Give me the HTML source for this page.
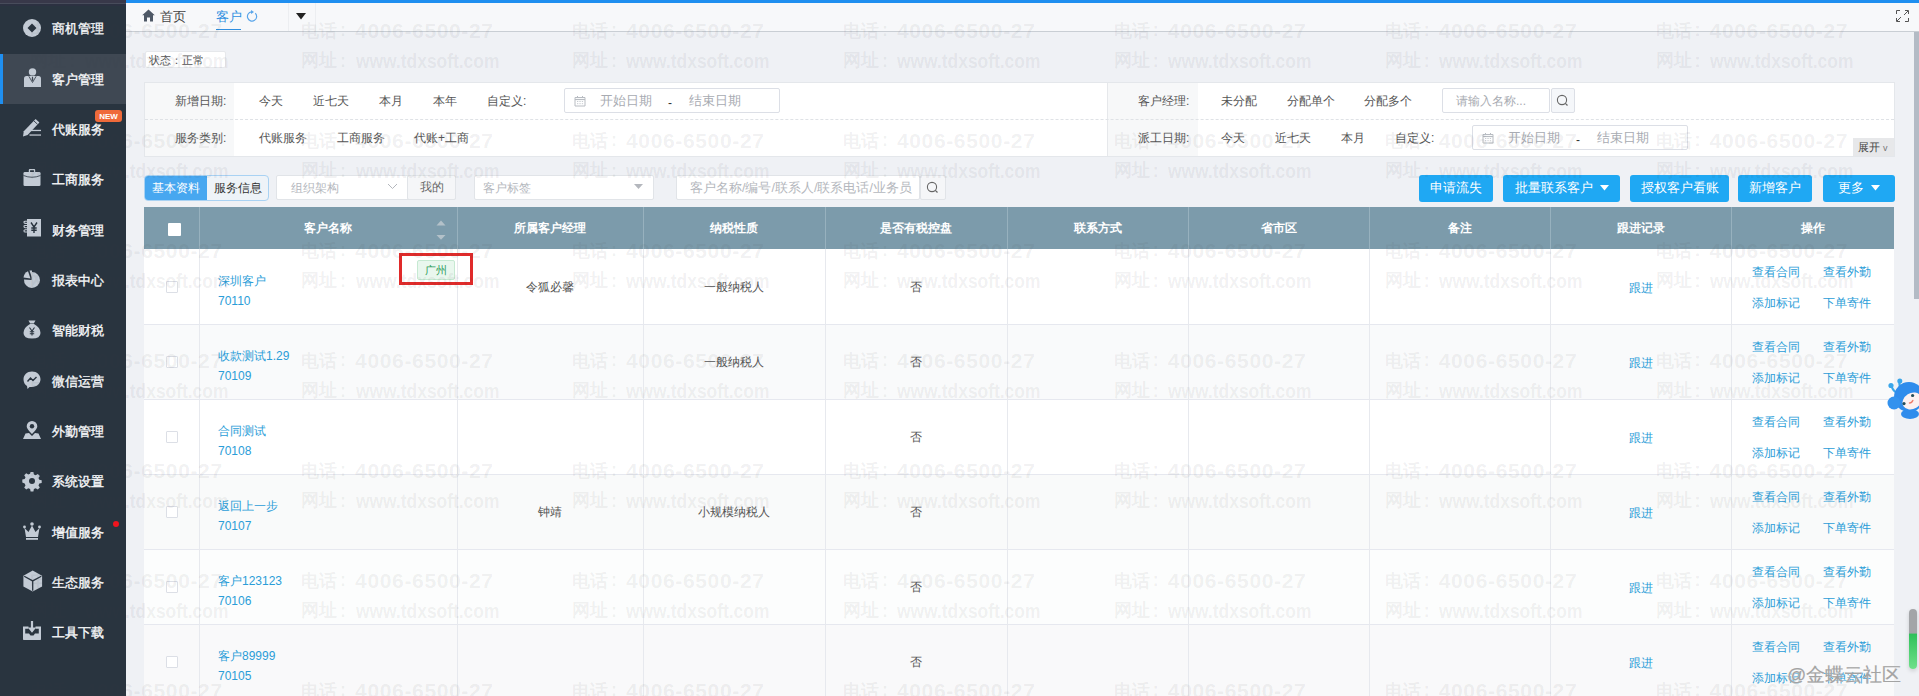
<!DOCTYPE html>
<html><head><meta charset="utf-8"><style>
*{box-sizing:border-box}
html,body{margin:0;padding:0}
body{width:1919px;height:696px;overflow:hidden;position:relative;background:#eff1f5;font-family:"Liberation Sans",sans-serif;font-size:12px;color:#555}
.a{position:absolute;white-space:nowrap}
.c{position:absolute;white-space:nowrap;text-align:center}
#side{position:absolute;left:0;top:0;width:126px;height:696px;background:#29343f}
.mi{position:absolute;left:0;width:126px}
.mi .t{position:absolute;left:52px;font-size:13px;line-height:16px;color:#f7f8fa;-webkit-text-stroke:0.35px #f7f8fa}

.lnk{color:#2c9ed9}
svg{overflow:visible}
.wm{position:absolute;color:rgba(120,120,120,0.11);font-weight:bold;font-size:20px;line-height:20px;white-space:nowrap}
</style></head><body>
<div id="side">
<div class="a" style="left:0;top:0;width:126px;height:3px;background:#383849"></div><div class="a" style="left:0;top:3px;width:126px;height:1px;background:#484c5b"></div><div class="a" style="left:0;top:4px;width:126px;height:2px;background:#2c3141"></div>
<div class="mi" style="top:3.50px;height:50.35px;">
<div style="position:absolute;left:22px;top:14.18px;width:20px;height:20px"><svg width="20" height="20" viewBox="0 0 20 20"><circle cx="10" cy="10" r="9" fill="#c3cbd5"/><path d="M10 5.5L14.5 10L10 14.5L5.5 10Z" fill="#29343f"/></svg></div>
<div class="t" style="top:17.68px">商机管理</div>
</div>
<div class="mi" style="top:53.85px;height:50.35px;background:#3f4853;">
<div class="a" style="left:0;top:0;width:3px;height:100%;background:#1f8ff0"></div>
<div style="position:absolute;left:22px;top:15.18px;width:20px;height:20px"><svg width="20" height="20" viewBox="0 0 20 20"><circle cx="10.5" cy="2.9" r="3.7" fill="#c3cbd5"/><path d="M2 9.5Q2 7 4.5 7L16.5 7Q19 7 19 9.5L19 18L2 18Z" fill="#c3cbd5"/><path d="M6.8 7.2L10.5 13.5L14.2 7.2" stroke="#3f4853" stroke-width="0.9" fill="none"/><path d="M10 7.8H11L11.3 11L10.5 12.6L9.7 11Z" fill="#3f4853"/></svg></div>
<div class="t" style="top:17.68px">客户管理</div>
</div>
<div class="mi" style="top:104.20px;height:50.35px;">
<div style="position:absolute;left:22px;top:14.18px;width:20px;height:20px"><svg width="20" height="20" viewBox="0 0 20 20"><path d="M1 18.5L1.8 13.3L13.6 0.9L17.4 4.4L5.6 16.9Z" fill="#c3cbd5"/><path d="M11.8 2.8L15.6 6.3" stroke="#29343f" stroke-width="0.9"/><rect x="8.5" y="11.8" width="10.5" height="1.3" fill="#c3cbd5"/><rect x="7.5" y="16.4" width="11.5" height="1.3" fill="#c3cbd5"/></svg></div>
<div class="t" style="top:17.68px">代账服务</div>
</div>
<div class="mi" style="top:154.55px;height:50.35px;">
<div style="position:absolute;left:22px;top:14.18px;width:20px;height:20px"><svg width="20" height="20" viewBox="0 0 20 20"><path d="M6.8 3V1Q6.8 0 7.8 0H12.2Q13.2 0 13.2 1V3H11.9V1.3H8.1V3Z" fill="#c3cbd5"/><rect x="1.5" y="3" width="17" height="14" rx="1.3" fill="#c3cbd5"/><path d="M1.5 6.5Q10 10 18.5 6.5" stroke="#29343f" stroke-width="0.8" fill="none"/></svg></div>
<div class="t" style="top:17.68px">工商服务</div>
</div>
<div class="mi" style="top:204.90px;height:50.35px;">
<div style="position:absolute;left:22px;top:14.18px;width:20px;height:20px"><svg width="20" height="20" viewBox="0 0 20 20"><rect x="5" y="0" width="14" height="17.5" fill="#c3cbd5"/><path d="M5.5 2.2H3.2Q2 2.2 2 3.3Q2 4.4 3.2 4.4H5.5M5.5 6.5H3.2Q2 6.5 2 7.6Q2 8.7 3.2 8.7H5.5M5.5 10.8H3.2Q2 10.8 2 11.9Q2 13 3.2 13H5.5" stroke="#c3cbd5" stroke-width="1.1" fill="none"/><path d="M9 3.5L12 8L15 3.5M12 8V14M9.3 9H14.7M9.3 11.3H14.7" stroke="#29343f" stroke-width="1.4" fill="none"/></svg></div>
<div class="t" style="top:17.68px">财务管理</div>
</div>
<div class="mi" style="top:255.25px;height:50.35px;">
<div style="position:absolute;left:22px;top:14.18px;width:20px;height:20px"><svg width="20" height="20" viewBox="0 0 20 20"><path d="M10 3A8 8 0 1 1 2 10.5L9.5 11Z" fill="#c3cbd5"/><path d="M1.5 8.5A8 8 0 0 1 6 2.2L8.5 9.5Z" fill="#c3cbd5"/><path d="M7.5 1.6A8 8 0 0 1 10 1.5L10 9Z" fill="#c3cbd5"/></svg></div>
<div class="t" style="top:17.68px">报表中心</div>
</div>
<div class="mi" style="top:305.60px;height:50.35px;">
<div style="position:absolute;left:22px;top:14.18px;width:20px;height:20px"><svg width="20" height="20" viewBox="0 0 20 20"><path d="M6.5 0.5H13.5L11.8 3.5H8.2Z" fill="#c3cbd5"/><path d="M8 4H12Q18.5 7.5 18.5 13Q18.5 18.5 10 18.5Q1.5 18.5 1.5 13Q1.5 7.5 8 4Z" fill="#c3cbd5"/><path d="M7.5 7.5L10 11L12.5 7.5M10 11V15.5M7.8 11.8H12.2M7.8 13.8H12.2" stroke="#29343f" stroke-width="1.1" fill="none"/></svg></div>
<div class="t" style="top:17.68px">智能财税</div>
</div>
<div class="mi" style="top:355.95px;height:50.35px;">
<div style="position:absolute;left:22px;top:14.18px;width:20px;height:20px"><svg width="20" height="20" viewBox="0 0 20 20"><path d="M10 1.5C15 1.5 18.5 5 18.5 9.3C18.5 13.6 15 17 10 17L7.5 17L5.5 19L5 16Q1.5 14 1.5 9.3C1.5 5 5 1.5 10 1.5Z" fill="#c3cbd5"/><path d="M5.5 11.5L8.5 8L11 10.5L14.5 7" stroke="#29343f" stroke-width="1.4" fill="none"/></svg></div>
<div class="t" style="top:17.68px">微信运营</div>
</div>
<div class="mi" style="top:406.30px;height:50.35px;">
<div style="position:absolute;left:22px;top:14.18px;width:20px;height:20px"><svg width="20" height="20" viewBox="0 0 20 20"><path d="M10 1A5.3 5.3 0 0 1 15.3 6.3C15.3 9.5 10 14 10 14C10 14 4.7 9.5 4.7 6.3A5.3 5.3 0 0 1 10 1Z" fill="#c3cbd5"/><circle cx="10" cy="6.2" r="2.2" fill="#29343f"/><path d="M1 19L3.5 13.5L7 13L10 16L13 13L16.5 13.5L19 19Z" fill="#c3cbd5"/></svg></div>
<div class="t" style="top:17.68px">外勤管理</div>
</div>
<div class="mi" style="top:456.65px;height:50.35px;">
<div style="position:absolute;left:22px;top:14.18px;width:20px;height:20px"><svg width="20" height="20" viewBox="0 0 20 20"><path d="M8.6 1h2.8l.5 2.4 1.8.8 2.1-1.3 2 2-1.3 2.1.8 1.8 2.4.5v2.8l-2.4.5-.8 1.8 1.3 2.1-2 2-2.1-1.3-1.8.8-.5 2.4H8.6l-.5-2.4-1.8-.8-2.1 1.3-2-2 1.3-2.1-.8-1.8L.3 11.4V8.6l2.4-.5.8-1.8-1.3-2.1 2-2 2.1 1.3 1.8-.8z" fill="#c3cbd5"/><circle cx="10" cy="10" r="3" fill="#29343f"/></svg></div>
<div class="t" style="top:17.68px">系统设置</div>
</div>
<div class="mi" style="top:507.00px;height:50.35px;">
<div style="position:absolute;left:22px;top:14.18px;width:20px;height:20px"><svg width="20" height="20" viewBox="0 0 20 20"><circle cx="10" cy="3" r="1.8" fill="#c3cbd5"/><circle cx="2.5" cy="6" r="1.4" fill="#c3cbd5"/><circle cx="17.5" cy="6" r="1.4" fill="#c3cbd5"/><path d="M2.5 7L6.5 11L10 4.5L13.5 11L17.5 7L16 16H4Z" fill="#c3cbd5"/><rect x="4" y="17" width="12" height="1.8" fill="#c3cbd5"/></svg></div>
<div class="t" style="top:17.68px">增值服务</div>
</div>
<div class="mi" style="top:557.35px;height:50.35px;">
<div style="position:absolute;left:22px;top:14.18px;width:20px;height:20px"><svg width="20" height="20" viewBox="0 0 20 20"><path d="M10.7 -1.5L20.1 3.8V14.5L10.7 19.5L1.4 14.5V3.8Z" fill="#c3cbd5"/><path d="M2.2 4.3L10.7 8.9L19.3 4.3M10.7 8.9V18.8" stroke="#29343f" stroke-width="1.3" fill="none"/></svg></div>
<div class="t" style="top:17.68px">生态服务</div>
</div>
<div class="mi" style="top:607.70px;height:50.35px;">
<div style="position:absolute;left:22px;top:14.18px;width:20px;height:20px"><svg width="20" height="20" viewBox="0 0 20 20"><path d="M1 4.5H6.5V6.8H3.2V11.5H7L8.5 13.5H11.5L13 11.5H16.8V6.8H13.5V4.5H19V17.3Q19 18 18.3 18H1.7Q1 18 1 17.3Z" fill="#c3cbd5"/><path d="M8.9 -1H11.1V5.5H14.2L10 10.8L5.8 5.5H8.9Z" fill="#c3cbd5"/></svg></div>
<div class="t" style="top:17.68px">工具下载</div>
</div>
<div class="a" style="left:95px;top:110px;width:27px;height:12px;background:#ef6a3a;border-radius:3px;color:#fff;font-size:8px;line-height:13px;font-weight:bold;text-align:center">NEW</div>
<div class="a" style="left:113px;top:521px;width:6px;height:6px;background:#f0141e;border-radius:50%"></div>
</div>
<div class="a" style="left:126px;top:0;width:1793px;height:3px;background:#1f8ff0"></div>
<div class="a" style="left:126px;top:3px;width:1793px;height:28px;background:#f7f8fa"></div>
<div class="a" style="left:126px;top:31px;width:1793px;height:1px;background:#c9ced4"></div>
<svg class="a" style="left:142px;top:9px" width="13" height="13" viewBox="0 0 13 13"><path d="M6.5 0.5L12.8 6.3H11V12.5H8V8.5H5V12.5H2V6.3H0.2Z" fill="#4e5866"/></svg>
<div class="a" style="left:160px;top:9px;font-size:13px;line-height:16px;color:#444">首页</div>
<div class="a" style="left:216px;top:9px;font-size:13px;line-height:16px;color:#2f8fe0">客户</div>
<svg class="a" style="left:245px;top:10px" width="13" height="13" viewBox="0 0 13 13"><path d="M10.3 3.2A4.6 4.6 0 1 1 6.5 1.9" stroke="#5aa6ea" stroke-width="1.2" fill="none"/><path d="M6 0L9 2L6 4Z" fill="#5aa6ea"/></svg>
<div class="a" style="left:216px;top:29px;width:25px;height:1.4px;background:#2f8fe0"></div>
<div class="a" style="left:288px;top:3px;width:1px;height:28px;background:#eceef1"></div>
<svg class="a" style="left:296px;top:13px" width="10" height="7" viewBox="0 0 10 7"><path d="M0 0H10L5 6.5Z" fill="#222"/></svg>
<div class="a" style="left:315px;top:3px;width:1px;height:28px;background:#eceef1"></div>
<svg class="a" style="left:1896px;top:10px" width="13" height="12" viewBox="0 0 13 12"><path d="M0.5 4V0.5H4M9 0.5H12.5V4M12.5 8V11.5H9M4 11.5H0.5V8M1 11L5 7M12 1L8 5" stroke="#555" stroke-width="1" fill="none"/></svg>
<div class="a" style="left:1914px;top:32px;width:5px;height:267px;background:#b3bbc5"></div>
<div class="a" style="left:145px;top:51px;width:81px;height:17px;background:#fff;border:1px solid #e6e8eb;border-radius:2px;font-size:11px;line-height:16px;color:#555;padding-left:3px">状态：正常</div>
<div class="a" style="left:144px;top:82px;width:1751px;height:75px;background:#fff;border:1px solid #e4e7eb"></div>
<div class="a" style="left:145px;top:83px;width:89px;height:73px;background:#f7f8f9"></div>
<div class="a" style="left:1108px;top:83px;width:90px;height:73px;background:#f7f8f9"></div>
<div class="a" style="left:1107px;top:83px;width:1px;height:73px;background:#e6e8eb"></div>
<div class="a" style="left:145px;top:119px;width:1749px;height:0;border-top:1px dashed #dfe2e6"></div>
<div class="a" style="left:175px;top:92.5px;font-size:12px;line-height:16px;color:#555;">新增日期:</div>
<div class="a" style="left:259px;top:92.5px;font-size:12px;line-height:16px;color:#555;">今天</div>
<div class="a" style="left:313px;top:92.5px;font-size:12px;line-height:16px;color:#555;">近七天</div>
<div class="a" style="left:379px;top:92.5px;font-size:12px;line-height:16px;color:#555;">本月</div>
<div class="a" style="left:433px;top:92.5px;font-size:12px;line-height:16px;color:#555;">本年</div>
<div class="a" style="left:487px;top:92.5px;font-size:12px;line-height:16px;color:#555;">自定义:</div>
<div class="a" style="left:175px;top:129.5px;font-size:12px;line-height:16px;color:#555;">服务类别:</div>
<div class="a" style="left:259px;top:129.5px;font-size:12px;line-height:16px;color:#555;">代账服务</div>
<div class="a" style="left:337px;top:129.5px;font-size:12px;line-height:16px;color:#555;">工商服务</div>
<div class="a" style="left:414px;top:129.5px;font-size:12px;line-height:16px;color:#555;">代账+工商</div>
<div class="a" style="left:1138px;top:92.5px;font-size:12px;line-height:16px;color:#555;">客户经理:</div>
<div class="a" style="left:1221px;top:92.5px;font-size:12px;line-height:16px;color:#555;">未分配</div>
<div class="a" style="left:1287px;top:92.5px;font-size:12px;line-height:16px;color:#555;">分配单个</div>
<div class="a" style="left:1364px;top:92.5px;font-size:12px;line-height:16px;color:#555;">分配多个</div>
<div class="a" style="left:1138px;top:129.5px;font-size:12px;line-height:16px;color:#555;">派工日期:</div>
<div class="a" style="left:1221px;top:129.5px;font-size:12px;line-height:16px;color:#555;">今天</div>
<div class="a" style="left:1275px;top:129.5px;font-size:12px;line-height:16px;color:#555;">近七天</div>
<div class="a" style="left:1341px;top:129.5px;font-size:12px;line-height:16px;color:#555;">本月</div>
<div class="a" style="left:1395px;top:129.5px;font-size:12px;line-height:16px;color:#555;">自定义:</div>
<div class="a" style="left:564px;top:88px;width:216px;height:25px;background:#fff;border:1px solid #dcdfe6;border-radius:2px"></div>
<div class="a" style="left:574px;top:95px;width:12px;height:12px"><svg width="12" height="12" viewBox="0 0 12 12"><path d="M1 2.5H11V11H1Z" stroke="#b8bcc2" stroke-width="1" fill="none"/><path d="M1 4.5H11" stroke="#b8bcc2" stroke-width="1.2"/><path d="M3.5 1V3M8.5 1V3" stroke="#b8bcc2"/><path d="M3 6.5h1.3M5.4 6.5h1.3M7.8 6.5h1.3M3 8.7h1.3M5.4 8.7h1.3M7.8 8.7h1.3" stroke="#c8ccd1"/></svg></div>
<div class="a" style="left:600px;top:92.5px;font-size:13px;line-height:16px;color:#a8abb2;">开始日期</div>
<div class="a" style="left:668px;top:94.5px;font-size:12px;line-height:16px;color:#333;">-</div>
<div class="a" style="left:689px;top:92.5px;font-size:13px;line-height:16px;color:#a8abb2;">结束日期</div>
<div class="a" style="left:1472px;top:125px;width:216px;height:25px;background:#fff;border:1px solid #dcdfe6;border-radius:2px"></div>
<div class="a" style="left:1482px;top:132px;width:12px;height:12px"><svg width="12" height="12" viewBox="0 0 12 12"><path d="M1 2.5H11V11H1Z" stroke="#b8bcc2" stroke-width="1" fill="none"/><path d="M1 4.5H11" stroke="#b8bcc2" stroke-width="1.2"/><path d="M3.5 1V3M8.5 1V3" stroke="#b8bcc2"/><path d="M3 6.5h1.3M5.4 6.5h1.3M7.8 6.5h1.3M3 8.7h1.3M5.4 8.7h1.3M7.8 8.7h1.3" stroke="#c8ccd1"/></svg></div>
<div class="a" style="left:1508px;top:129.5px;font-size:13px;line-height:16px;color:#a8abb2;">开始日期</div>
<div class="a" style="left:1576px;top:131.5px;font-size:12px;line-height:16px;color:#333;">-</div>
<div class="a" style="left:1597px;top:129.5px;font-size:13px;line-height:16px;color:#a8abb2;">结束日期</div>
<div class="a" style="left:1442px;top:88px;width:108px;height:25px;background:#fff;border:1px solid #dcdfe6;border-radius:2px"></div>
<div class="a" style="left:1456px;top:92.5px;font-size:12px;line-height:16px;color:#a8abb2;">请输入名称...</div>
<div class="a" style="left:1551px;top:88px;width:24px;height:25px;background:#f5f7fa;border:1px solid #dcdfe6;border-radius:2px"></div>
<svg class="a" style="left:1556px;top:94px" width="13" height="13" viewBox="0 0 13 13"><circle cx="6" cy="6" r="4.6" stroke="#666" stroke-width="1.1" fill="none"/><path d="M9.3 9.3L11.5 11.5" stroke="#666" stroke-width="1.2"/></svg>
<div class="a" style="left:1853px;top:138px;width:41px;height:18px;background:#e7e8ea;font-size:11px;line-height:18px;color:#444;padding-left:5px">展开 <span style="font-size:9px;color:#777">v</span></div>
<div class="a" style="left:144px;top:175px;width:125px;height:26px;border:1px solid #a9d2f3;border-radius:4px;background:#eef3f8;overflow:hidden"><div class="a" style="left:0;top:0;width:62px;height:24px;background:#47a7f0;color:#fff;font-size:12px;line-height:24px;text-align:center">基本资料</div><div class="a" style="left:62px;top:0;width:61px;height:24px;color:#333;font-size:12px;line-height:24px;text-align:center">服务信息</div></div>
<div class="a" style="left:276px;top:175px;width:180px;height:25px;background:#fff;border:1px solid #e1e4e8;border-radius:2px"></div>
<div class="a" style="left:291px;top:179.5px;font-size:12px;line-height:16px;color:#b4b7bd;">组织架构</div>
<svg class="a" style="left:387px;top:183px" width="11" height="7" viewBox="0 0 11 7"><path d="M1 1L5.5 5.5L10 1" stroke="#b4b7bd" stroke-width="1" fill="none"/></svg>
<div class="a" style="left:407px;top:175px;width:49px;height:25px;background:#f5f6f8;border:1px solid #e1e4e8;border-radius:2px;font-size:12px;line-height:23px;color:#666;text-align:center">我的</div>
<div class="a" style="left:474px;top:175px;width:180px;height:25px;background:#fff;border:1px solid #e1e4e8;border-radius:2px"></div>
<div class="a" style="left:483px;top:179.5px;font-size:12px;line-height:16px;color:#b4b7bd;">客户标签</div>
<svg class="a" style="left:634px;top:184px" width="9" height="5" viewBox="0 0 9 5"><path d="M0 0H9L4.5 5Z" fill="#b4b7bd"/></svg>
<div class="a" style="left:676px;top:175px;width:244px;height:25px;background:#fff;border:1px solid #e1e4e8;border-radius:2px"></div>
<div class="a" style="left:690px;top:179.5px;font-size:12.5px;line-height:16px;color:#b4b7bd;">客户名称/编号/联系人/联系电话/业务员</div>
<div class="a" style="left:920px;top:175px;width:26px;height:25px;background:#f5f6f8;border:1px solid #e1e4e8;border-radius:2px"></div>
<svg class="a" style="left:926px;top:181px" width="13" height="13" viewBox="0 0 13 13"><circle cx="6" cy="6" r="4.6" stroke="#666" stroke-width="1.1" fill="none"/><path d="M9.3 9.3L11.5 11.5" stroke="#666" stroke-width="1.2"/></svg>
<div class="a" style="left:1419px;top:175px;width:74px;height:27px;background:#1fa8f3;border-radius:3px;color:#fff;font-size:13px;line-height:25px;text-align:center">申请流失</div>
<div class="a" style="left:1503px;top:175px;width:117px;height:27px;background:#1fa8f3;border-radius:3px;color:#fff;font-size:13px;line-height:25px;text-align:center">批量联系客户<svg width="9" height="6" viewBox="0 0 9 6" style="margin-left:7px;vertical-align:1px"><path d="M0 0H9L4.5 5.5Z" fill="#fff"/></svg></div>
<div class="a" style="left:1630px;top:175px;width:99px;height:27px;background:#1fa8f3;border-radius:3px;color:#fff;font-size:13px;line-height:25px;text-align:center">授权客户看账</div>
<div class="a" style="left:1738px;top:175px;width:74px;height:27px;background:#1fa8f3;border-radius:3px;color:#fff;font-size:13px;line-height:25px;text-align:center">新增客户</div>
<div class="a" style="left:1823px;top:175px;width:72px;height:27px;background:#1fa8f3;border-radius:3px;color:#fff;font-size:13px;line-height:25px;text-align:center">更多<svg width="9" height="6" viewBox="0 0 9 6" style="margin-left:7px;vertical-align:1px"><path d="M0 0H9L4.5 5.5Z" fill="#fff"/></svg></div>
<div class="a" style="left:144px;top:249px;width:1750px;height:75px;background:#ffffff"></div>
<div class="a" style="left:144px;top:324px;width:1750px;height:75px;background:#f9fafb"></div>
<div class="a" style="left:144px;top:399px;width:1750px;height:75px;background:#ffffff"></div>
<div class="a" style="left:144px;top:474px;width:1750px;height:75px;background:#f9fafa"></div>
<div class="a" style="left:144px;top:549px;width:1750px;height:75px;background:#fcfdfd"></div>
<div class="a" style="left:144px;top:624px;width:1750px;height:75px;background:#f9f9fa"></div>
<div class="a" style="left:144px;top:324px;width:1750px;height:1px;background:#e6e8ef"></div>
<div class="a" style="left:144px;top:399px;width:1750px;height:1px;background:#e6e8ef"></div>
<div class="a" style="left:144px;top:474px;width:1750px;height:1px;background:#e6e8ef"></div>
<div class="a" style="left:144px;top:549px;width:1750px;height:1px;background:#e6e8ef"></div>
<div class="a" style="left:144px;top:624px;width:1750px;height:1px;background:#e6e8ef"></div>
<div class="a" style="left:144px;top:699px;width:1750px;height:1px;background:#e6e8ef"></div>
<div class="a" style="left:199px;top:249px;width:1px;height:447px;background:#e7e9ee"></div>
<div class="a" style="left:457px;top:249px;width:1px;height:447px;background:#e7e9ee"></div>
<div class="a" style="left:643px;top:249px;width:1px;height:447px;background:#e7e9ee"></div>
<div class="a" style="left:825px;top:249px;width:1px;height:447px;background:#e7e9ee"></div>
<div class="a" style="left:1007px;top:249px;width:1px;height:447px;background:#e7e9ee"></div>
<div class="a" style="left:1188px;top:249px;width:1px;height:447px;background:#e7e9ee"></div>
<div class="a" style="left:1369px;top:249px;width:1px;height:447px;background:#e7e9ee"></div>
<div class="a" style="left:1550px;top:249px;width:1px;height:447px;background:#e7e9ee"></div>
<div class="a" style="left:1731px;top:249px;width:1px;height:447px;background:#e7e9ee"></div>
<div class="a" style="left:144px;top:207px;width:1750px;height:42px;background:#7c9bab"></div>
<div class="a" style="left:199px;top:207px;width:1px;height:42px;background:#97b1be"></div>
<div class="a" style="left:457px;top:207px;width:1px;height:42px;background:#97b1be"></div>
<div class="a" style="left:643px;top:207px;width:1px;height:42px;background:#97b1be"></div>
<div class="a" style="left:825px;top:207px;width:1px;height:42px;background:#97b1be"></div>
<div class="a" style="left:1007px;top:207px;width:1px;height:42px;background:#97b1be"></div>
<div class="a" style="left:1188px;top:207px;width:1px;height:42px;background:#97b1be"></div>
<div class="a" style="left:1369px;top:207px;width:1px;height:42px;background:#97b1be"></div>
<div class="a" style="left:1550px;top:207px;width:1px;height:42px;background:#97b1be"></div>
<div class="a" style="left:1731px;top:207px;width:1px;height:42px;background:#97b1be"></div>
<div class="c" style="left:199px;top:220px;width:258px;font-size:12px;line-height:16px;font-weight:bold;color:#fff">客户名称</div>
<div class="c" style="left:457px;top:220px;width:186px;font-size:12px;line-height:16px;font-weight:bold;color:#fff">所属客户经理</div>
<div class="c" style="left:643px;top:220px;width:182px;font-size:12px;line-height:16px;font-weight:bold;color:#fff">纳税性质</div>
<div class="c" style="left:825px;top:220px;width:182px;font-size:12px;line-height:16px;font-weight:bold;color:#fff">是否有税控盘</div>
<div class="c" style="left:1007px;top:220px;width:181px;font-size:12px;line-height:16px;font-weight:bold;color:#fff">联系方式</div>
<div class="c" style="left:1188px;top:220px;width:181px;font-size:12px;line-height:16px;font-weight:bold;color:#fff">省市区</div>
<div class="c" style="left:1369px;top:220px;width:181px;font-size:12px;line-height:16px;font-weight:bold;color:#fff">备注</div>
<div class="c" style="left:1550px;top:220px;width:181px;font-size:12px;line-height:16px;font-weight:bold;color:#fff">跟进记录</div>
<div class="c" style="left:1731px;top:220px;width:163px;font-size:12px;line-height:16px;font-weight:bold;color:#fff">操作</div>
<div class="a" style="left:168px;top:223px;width:13px;height:13px;background:#fff;border-radius:1px"></div>
<svg class="a" style="left:436px;top:210px" width="10" height="31" viewBox="0 0 10 31"><path d="M0.5 15.6L5 10.6L9.5 15.6Z" fill="#b3c1c9"/><path d="M0.5 25L5 29.8L9.5 25Z" fill="#b3c1c9"/></svg>
<div class="a" style="left:166px;top:281px;width:12px;height:12px;background:#fff;border:1px solid #dcdfe6;border-radius:1px"></div>
<div class="a" style="left:218px;top:273px;font-size:12px;line-height:16px;color:#2b9dd8">深圳客户</div>
<div class="a" style="left:218px;top:293px;font-size:12px;line-height:16px;color:#2b9dd8">70110</div>
<div class="c" style="left:457px;top:279px;width:186px;font-size:12px;line-height:16px;color:#555">令狐必馨</div>
<div class="c" style="left:643px;top:279px;width:182px;font-size:12px;line-height:16px;color:#555">一般纳税人</div>
<div class="c" style="left:825px;top:279px;width:182px;font-size:12px;line-height:16px;color:#555">否</div>
<div class="c" style="left:1550px;top:280px;width:181px;font-size:12px;line-height:16px;color:#2b9dd8">跟进</div>
<div class="a" style="left:1752px;top:264px;font-size:12px;line-height:16px;color:#2b9dd8">查看合同</div>
<div class="a" style="left:1823px;top:264px;font-size:12px;line-height:16px;color:#2b9dd8">查看外勤</div>
<div class="a" style="left:1752px;top:295px;font-size:12px;line-height:16px;color:#2b9dd8">添加标记</div>
<div class="a" style="left:1823px;top:295px;font-size:12px;line-height:16px;color:#2b9dd8">下单寄件</div>
<div class="a" style="left:166px;top:356px;width:12px;height:12px;background:#fff;border:1px solid #dcdfe6;border-radius:1px"></div>
<div class="a" style="left:218px;top:348px;font-size:12px;line-height:16px;color:#2b9dd8">收款测试1.29</div>
<div class="a" style="left:218px;top:368px;font-size:12px;line-height:16px;color:#2b9dd8">70109</div>
<div class="c" style="left:643px;top:354px;width:182px;font-size:12px;line-height:16px;color:#555">一般纳税人</div>
<div class="c" style="left:825px;top:354px;width:182px;font-size:12px;line-height:16px;color:#555">否</div>
<div class="c" style="left:1550px;top:355px;width:181px;font-size:12px;line-height:16px;color:#2b9dd8">跟进</div>
<div class="a" style="left:1752px;top:339px;font-size:12px;line-height:16px;color:#2b9dd8">查看合同</div>
<div class="a" style="left:1823px;top:339px;font-size:12px;line-height:16px;color:#2b9dd8">查看外勤</div>
<div class="a" style="left:1752px;top:370px;font-size:12px;line-height:16px;color:#2b9dd8">添加标记</div>
<div class="a" style="left:1823px;top:370px;font-size:12px;line-height:16px;color:#2b9dd8">下单寄件</div>
<div class="a" style="left:166px;top:431px;width:12px;height:12px;background:#fff;border:1px solid #dcdfe6;border-radius:1px"></div>
<div class="a" style="left:218px;top:423px;font-size:12px;line-height:16px;color:#2b9dd8">合同测试</div>
<div class="a" style="left:218px;top:443px;font-size:12px;line-height:16px;color:#2b9dd8">70108</div>
<div class="c" style="left:825px;top:429px;width:182px;font-size:12px;line-height:16px;color:#555">否</div>
<div class="c" style="left:1550px;top:430px;width:181px;font-size:12px;line-height:16px;color:#2b9dd8">跟进</div>
<div class="a" style="left:1752px;top:414px;font-size:12px;line-height:16px;color:#2b9dd8">查看合同</div>
<div class="a" style="left:1823px;top:414px;font-size:12px;line-height:16px;color:#2b9dd8">查看外勤</div>
<div class="a" style="left:1752px;top:445px;font-size:12px;line-height:16px;color:#2b9dd8">添加标记</div>
<div class="a" style="left:1823px;top:445px;font-size:12px;line-height:16px;color:#2b9dd8">下单寄件</div>
<div class="a" style="left:166px;top:506px;width:12px;height:12px;background:#fff;border:1px solid #dcdfe6;border-radius:1px"></div>
<div class="a" style="left:218px;top:498px;font-size:12px;line-height:16px;color:#2b9dd8">返回上一步</div>
<div class="a" style="left:218px;top:518px;font-size:12px;line-height:16px;color:#2b9dd8">70107</div>
<div class="c" style="left:457px;top:504px;width:186px;font-size:12px;line-height:16px;color:#555">钟靖</div>
<div class="c" style="left:643px;top:504px;width:182px;font-size:12px;line-height:16px;color:#555">小规模纳税人</div>
<div class="c" style="left:825px;top:504px;width:182px;font-size:12px;line-height:16px;color:#555">否</div>
<div class="c" style="left:1550px;top:505px;width:181px;font-size:12px;line-height:16px;color:#2b9dd8">跟进</div>
<div class="a" style="left:1752px;top:489px;font-size:12px;line-height:16px;color:#2b9dd8">查看合同</div>
<div class="a" style="left:1823px;top:489px;font-size:12px;line-height:16px;color:#2b9dd8">查看外勤</div>
<div class="a" style="left:1752px;top:520px;font-size:12px;line-height:16px;color:#2b9dd8">添加标记</div>
<div class="a" style="left:1823px;top:520px;font-size:12px;line-height:16px;color:#2b9dd8">下单寄件</div>
<div class="a" style="left:166px;top:581px;width:12px;height:12px;background:#fff;border:1px solid #dcdfe6;border-radius:1px"></div>
<div class="a" style="left:218px;top:573px;font-size:12px;line-height:16px;color:#2b9dd8">客户123123</div>
<div class="a" style="left:218px;top:593px;font-size:12px;line-height:16px;color:#2b9dd8">70106</div>
<div class="c" style="left:825px;top:579px;width:182px;font-size:12px;line-height:16px;color:#555">否</div>
<div class="c" style="left:1550px;top:580px;width:181px;font-size:12px;line-height:16px;color:#2b9dd8">跟进</div>
<div class="a" style="left:1752px;top:564px;font-size:12px;line-height:16px;color:#2b9dd8">查看合同</div>
<div class="a" style="left:1823px;top:564px;font-size:12px;line-height:16px;color:#2b9dd8">查看外勤</div>
<div class="a" style="left:1752px;top:595px;font-size:12px;line-height:16px;color:#2b9dd8">添加标记</div>
<div class="a" style="left:1823px;top:595px;font-size:12px;line-height:16px;color:#2b9dd8">下单寄件</div>
<div class="a" style="left:166px;top:656px;width:12px;height:12px;background:#fff;border:1px solid #dcdfe6;border-radius:1px"></div>
<div class="a" style="left:218px;top:648px;font-size:12px;line-height:16px;color:#2b9dd8">客户89999</div>
<div class="a" style="left:218px;top:668px;font-size:12px;line-height:16px;color:#2b9dd8">70105</div>
<div class="c" style="left:825px;top:654px;width:182px;font-size:12px;line-height:16px;color:#555">否</div>
<div class="c" style="left:1550px;top:655px;width:181px;font-size:12px;line-height:16px;color:#2b9dd8">跟进</div>
<div class="a" style="left:1752px;top:639px;font-size:12px;line-height:16px;color:#2b9dd8">查看合同</div>
<div class="a" style="left:1823px;top:639px;font-size:12px;line-height:16px;color:#2b9dd8">查看外勤</div>
<div class="a" style="left:1752px;top:670px;font-size:12px;line-height:16px;color:#2b9dd8">添加标记</div>
<div class="a" style="left:1823px;top:670px;font-size:12px;line-height:16px;color:#2b9dd8">下单寄件</div>
<div class="a" style="left:417px;top:260px;width:38px;height:20px;background:#e9f7ee;border:1px solid #c6e9d2;border-radius:2px;color:#2f9d5c;font-size:11px;line-height:18px;text-align:center">广州</div>
<div class="a" style="left:399px;top:253px;width:74px;height:32px;border:3px solid #e02a2a"></div>
<svg class="a" style="left:1886px;top:376px" width="33" height="45" viewBox="0 0 33 45"><path d="M5.5 10Q7 15 11 17" stroke="#3aa6ea" stroke-width="2.2" fill="none" stroke-linecap="round"/><circle cx="5" cy="9.5" r="2.6" fill="#3aa6ea"/><path d="M13.5 5Q13 11 15.5 13" stroke="#3aa6ea" stroke-width="2.2" fill="none" stroke-linecap="round"/><circle cx="13.8" cy="5" r="2.5" fill="#3aa6ea"/><circle cx="23" cy="21" r="15" fill="#2f8cec"/><circle cx="8" cy="27" r="6.5" fill="#3392ee"/><ellipse cx="24" cy="38" rx="9" ry="5" fill="#2f8cec"/><ellipse cx="26" cy="25" rx="10" ry="8" transform="rotate(-32 26 25)" fill="#fcf1f1"/><circle cx="26.6" cy="19.5" r="1.6" fill="#234e5a"/><circle cx="18" cy="27.6" r="1.6" fill="#234e5a"/><path d="M23.5 27Q25.8 27 26.8 24.5" stroke="#ee7d6a" stroke-width="1.5" fill="none" stroke-linecap="round"/></svg>
<div class="a" style="left:1909px;top:609px;width:8px;height:60px;border-radius:4px;background:linear-gradient(#a3a5a8 0 40%,#2fc15a 42%,#6fe08a 100%);box-shadow:0 2px 4px rgba(0,0,0,0.15)"></div>
<style>.w1,.w2,.w3,.w4,.w5{position:absolute;white-space:nowrap;font-weight:bold;color:rgba(60,62,70,0.08)}.w1{font-size:18px;line-height:18px}.w2{font-size:18px;line-height:18px}.w3{font-size:21px;line-height:21px;letter-spacing:0.65px}.w4{font-size:20px;line-height:20px;transform:scaleX(0.87);transform-origin:0 0}</style>
<div class="w1" style="left:-240.7px;top:22.0px">电话</div><div class="w2" style="left:-201.7px;top:21.0px">:</div><div class="w3" style="left:-186.7px;top:20.1px">4006-6500-27</div>
<div class="w1" style="left:-240.7px;top:50.9px">网址</div><div class="w2" style="left:-201.7px;top:51.9px">:</div><div class="w4" style="left:-186.3px;top:50.5px">www.tdxsoft.com</div>
<div class="w1" style="left:30.2px;top:22.0px">电话</div><div class="w2" style="left:69.2px;top:21.0px">:</div><div class="w3" style="left:84.2px;top:20.1px">4006-6500-27</div>
<div class="w1" style="left:30.2px;top:50.9px">网址</div><div class="w2" style="left:69.2px;top:51.9px">:</div><div class="w4" style="left:84.6px;top:50.5px">www.tdxsoft.com</div>
<div class="w1" style="left:301.1px;top:22.0px">电话</div><div class="w2" style="left:340.1px;top:21.0px">:</div><div class="w3" style="left:355.1px;top:20.1px">4006-6500-27</div>
<div class="w1" style="left:301.1px;top:50.9px">网址</div><div class="w2" style="left:340.1px;top:51.9px">:</div><div class="w4" style="left:355.5px;top:50.5px">www.tdxsoft.com</div>
<div class="w1" style="left:572.0px;top:22.0px">电话</div><div class="w2" style="left:611.0px;top:21.0px">:</div><div class="w3" style="left:626.0px;top:20.1px">4006-6500-27</div>
<div class="w1" style="left:572.0px;top:50.9px">网址</div><div class="w2" style="left:611.0px;top:51.9px">:</div><div class="w4" style="left:626.4px;top:50.5px">www.tdxsoft.com</div>
<div class="w1" style="left:842.9px;top:22.0px">电话</div><div class="w2" style="left:881.9px;top:21.0px">:</div><div class="w3" style="left:896.9px;top:20.1px">4006-6500-27</div>
<div class="w1" style="left:842.9px;top:50.9px">网址</div><div class="w2" style="left:881.9px;top:51.9px">:</div><div class="w4" style="left:897.3px;top:50.5px">www.tdxsoft.com</div>
<div class="w1" style="left:1113.8px;top:22.0px">电话</div><div class="w2" style="left:1152.8px;top:21.0px">:</div><div class="w3" style="left:1167.8px;top:20.1px">4006-6500-27</div>
<div class="w1" style="left:1113.8px;top:50.9px">网址</div><div class="w2" style="left:1152.8px;top:51.9px">:</div><div class="w4" style="left:1168.2px;top:50.5px">www.tdxsoft.com</div>
<div class="w1" style="left:1384.7px;top:22.0px">电话</div><div class="w2" style="left:1423.7px;top:21.0px">:</div><div class="w3" style="left:1438.7px;top:20.1px">4006-6500-27</div>
<div class="w1" style="left:1384.7px;top:50.9px">网址</div><div class="w2" style="left:1423.7px;top:51.9px">:</div><div class="w4" style="left:1439.1px;top:50.5px">www.tdxsoft.com</div>
<div class="w1" style="left:1655.6px;top:22.0px">电话</div><div class="w2" style="left:1694.6px;top:21.0px">:</div><div class="w3" style="left:1709.6px;top:20.1px">4006-6500-27</div>
<div class="w1" style="left:1655.6px;top:50.9px">网址</div><div class="w2" style="left:1694.6px;top:51.9px">:</div><div class="w4" style="left:1710.0px;top:50.5px">www.tdxsoft.com</div>
<div class="w1" style="left:-240.7px;top:132.0px">电话</div><div class="w2" style="left:-201.7px;top:131.0px">:</div><div class="w3" style="left:-186.7px;top:130.1px">4006-6500-27</div>
<div class="w1" style="left:-240.7px;top:160.9px">网址</div><div class="w2" style="left:-201.7px;top:161.9px">:</div><div class="w4" style="left:-186.3px;top:160.5px">www.tdxsoft.com</div>
<div class="w1" style="left:30.2px;top:132.0px">电话</div><div class="w2" style="left:69.2px;top:131.0px">:</div><div class="w3" style="left:84.2px;top:130.1px">4006-6500-27</div>
<div class="w1" style="left:30.2px;top:160.9px">网址</div><div class="w2" style="left:69.2px;top:161.9px">:</div><div class="w4" style="left:84.6px;top:160.5px">www.tdxsoft.com</div>
<div class="w1" style="left:301.1px;top:132.0px">电话</div><div class="w2" style="left:340.1px;top:131.0px">:</div><div class="w3" style="left:355.1px;top:130.1px">4006-6500-27</div>
<div class="w1" style="left:301.1px;top:160.9px">网址</div><div class="w2" style="left:340.1px;top:161.9px">:</div><div class="w4" style="left:355.5px;top:160.5px">www.tdxsoft.com</div>
<div class="w1" style="left:572.0px;top:132.0px">电话</div><div class="w2" style="left:611.0px;top:131.0px">:</div><div class="w3" style="left:626.0px;top:130.1px">4006-6500-27</div>
<div class="w1" style="left:572.0px;top:160.9px">网址</div><div class="w2" style="left:611.0px;top:161.9px">:</div><div class="w4" style="left:626.4px;top:160.5px">www.tdxsoft.com</div>
<div class="w1" style="left:842.9px;top:132.0px">电话</div><div class="w2" style="left:881.9px;top:131.0px">:</div><div class="w3" style="left:896.9px;top:130.1px">4006-6500-27</div>
<div class="w1" style="left:842.9px;top:160.9px">网址</div><div class="w2" style="left:881.9px;top:161.9px">:</div><div class="w4" style="left:897.3px;top:160.5px">www.tdxsoft.com</div>
<div class="w1" style="left:1113.8px;top:132.0px">电话</div><div class="w2" style="left:1152.8px;top:131.0px">:</div><div class="w3" style="left:1167.8px;top:130.1px">4006-6500-27</div>
<div class="w1" style="left:1113.8px;top:160.9px">网址</div><div class="w2" style="left:1152.8px;top:161.9px">:</div><div class="w4" style="left:1168.2px;top:160.5px">www.tdxsoft.com</div>
<div class="w1" style="left:1384.7px;top:132.0px">电话</div><div class="w2" style="left:1423.7px;top:131.0px">:</div><div class="w3" style="left:1438.7px;top:130.1px">4006-6500-27</div>
<div class="w1" style="left:1384.7px;top:160.9px">网址</div><div class="w2" style="left:1423.7px;top:161.9px">:</div><div class="w4" style="left:1439.1px;top:160.5px">www.tdxsoft.com</div>
<div class="w1" style="left:1655.6px;top:132.0px">电话</div><div class="w2" style="left:1694.6px;top:131.0px">:</div><div class="w3" style="left:1709.6px;top:130.1px">4006-6500-27</div>
<div class="w1" style="left:1655.6px;top:160.9px">网址</div><div class="w2" style="left:1694.6px;top:161.9px">:</div><div class="w4" style="left:1710.0px;top:160.5px">www.tdxsoft.com</div>
<div class="w1" style="left:-240.7px;top:242.0px">电话</div><div class="w2" style="left:-201.7px;top:241.0px">:</div><div class="w3" style="left:-186.7px;top:240.1px">4006-6500-27</div>
<div class="w1" style="left:-240.7px;top:270.9px">网址</div><div class="w2" style="left:-201.7px;top:271.9px">:</div><div class="w4" style="left:-186.3px;top:270.5px">www.tdxsoft.com</div>
<div class="w1" style="left:30.2px;top:242.0px">电话</div><div class="w2" style="left:69.2px;top:241.0px">:</div><div class="w3" style="left:84.2px;top:240.1px">4006-6500-27</div>
<div class="w1" style="left:30.2px;top:270.9px">网址</div><div class="w2" style="left:69.2px;top:271.9px">:</div><div class="w4" style="left:84.6px;top:270.5px">www.tdxsoft.com</div>
<div class="w1" style="left:301.1px;top:242.0px">电话</div><div class="w2" style="left:340.1px;top:241.0px">:</div><div class="w3" style="left:355.1px;top:240.1px">4006-6500-27</div>
<div class="w1" style="left:301.1px;top:270.9px">网址</div><div class="w2" style="left:340.1px;top:271.9px">:</div><div class="w4" style="left:355.5px;top:270.5px">www.tdxsoft.com</div>
<div class="w1" style="left:572.0px;top:242.0px">电话</div><div class="w2" style="left:611.0px;top:241.0px">:</div><div class="w3" style="left:626.0px;top:240.1px">4006-6500-27</div>
<div class="w1" style="left:572.0px;top:270.9px">网址</div><div class="w2" style="left:611.0px;top:271.9px">:</div><div class="w4" style="left:626.4px;top:270.5px">www.tdxsoft.com</div>
<div class="w1" style="left:842.9px;top:242.0px">电话</div><div class="w2" style="left:881.9px;top:241.0px">:</div><div class="w3" style="left:896.9px;top:240.1px">4006-6500-27</div>
<div class="w1" style="left:842.9px;top:270.9px">网址</div><div class="w2" style="left:881.9px;top:271.9px">:</div><div class="w4" style="left:897.3px;top:270.5px">www.tdxsoft.com</div>
<div class="w1" style="left:1113.8px;top:242.0px">电话</div><div class="w2" style="left:1152.8px;top:241.0px">:</div><div class="w3" style="left:1167.8px;top:240.1px">4006-6500-27</div>
<div class="w1" style="left:1113.8px;top:270.9px">网址</div><div class="w2" style="left:1152.8px;top:271.9px">:</div><div class="w4" style="left:1168.2px;top:270.5px">www.tdxsoft.com</div>
<div class="w1" style="left:1384.7px;top:242.0px">电话</div><div class="w2" style="left:1423.7px;top:241.0px">:</div><div class="w3" style="left:1438.7px;top:240.1px">4006-6500-27</div>
<div class="w1" style="left:1384.7px;top:270.9px">网址</div><div class="w2" style="left:1423.7px;top:271.9px">:</div><div class="w4" style="left:1439.1px;top:270.5px">www.tdxsoft.com</div>
<div class="w1" style="left:1655.6px;top:242.0px">电话</div><div class="w2" style="left:1694.6px;top:241.0px">:</div><div class="w3" style="left:1709.6px;top:240.1px">4006-6500-27</div>
<div class="w1" style="left:1655.6px;top:270.9px">网址</div><div class="w2" style="left:1694.6px;top:271.9px">:</div><div class="w4" style="left:1710.0px;top:270.5px">www.tdxsoft.com</div>
<div class="w1" style="left:-240.7px;top:352.0px">电话</div><div class="w2" style="left:-201.7px;top:351.0px">:</div><div class="w3" style="left:-186.7px;top:350.1px">4006-6500-27</div>
<div class="w1" style="left:-240.7px;top:380.9px">网址</div><div class="w2" style="left:-201.7px;top:381.9px">:</div><div class="w4" style="left:-186.3px;top:380.5px">www.tdxsoft.com</div>
<div class="w1" style="left:30.2px;top:352.0px">电话</div><div class="w2" style="left:69.2px;top:351.0px">:</div><div class="w3" style="left:84.2px;top:350.1px">4006-6500-27</div>
<div class="w1" style="left:30.2px;top:380.9px">网址</div><div class="w2" style="left:69.2px;top:381.9px">:</div><div class="w4" style="left:84.6px;top:380.5px">www.tdxsoft.com</div>
<div class="w1" style="left:301.1px;top:352.0px">电话</div><div class="w2" style="left:340.1px;top:351.0px">:</div><div class="w3" style="left:355.1px;top:350.1px">4006-6500-27</div>
<div class="w1" style="left:301.1px;top:380.9px">网址</div><div class="w2" style="left:340.1px;top:381.9px">:</div><div class="w4" style="left:355.5px;top:380.5px">www.tdxsoft.com</div>
<div class="w1" style="left:572.0px;top:352.0px">电话</div><div class="w2" style="left:611.0px;top:351.0px">:</div><div class="w3" style="left:626.0px;top:350.1px">4006-6500-27</div>
<div class="w1" style="left:572.0px;top:380.9px">网址</div><div class="w2" style="left:611.0px;top:381.9px">:</div><div class="w4" style="left:626.4px;top:380.5px">www.tdxsoft.com</div>
<div class="w1" style="left:842.9px;top:352.0px">电话</div><div class="w2" style="left:881.9px;top:351.0px">:</div><div class="w3" style="left:896.9px;top:350.1px">4006-6500-27</div>
<div class="w1" style="left:842.9px;top:380.9px">网址</div><div class="w2" style="left:881.9px;top:381.9px">:</div><div class="w4" style="left:897.3px;top:380.5px">www.tdxsoft.com</div>
<div class="w1" style="left:1113.8px;top:352.0px">电话</div><div class="w2" style="left:1152.8px;top:351.0px">:</div><div class="w3" style="left:1167.8px;top:350.1px">4006-6500-27</div>
<div class="w1" style="left:1113.8px;top:380.9px">网址</div><div class="w2" style="left:1152.8px;top:381.9px">:</div><div class="w4" style="left:1168.2px;top:380.5px">www.tdxsoft.com</div>
<div class="w1" style="left:1384.7px;top:352.0px">电话</div><div class="w2" style="left:1423.7px;top:351.0px">:</div><div class="w3" style="left:1438.7px;top:350.1px">4006-6500-27</div>
<div class="w1" style="left:1384.7px;top:380.9px">网址</div><div class="w2" style="left:1423.7px;top:381.9px">:</div><div class="w4" style="left:1439.1px;top:380.5px">www.tdxsoft.com</div>
<div class="w1" style="left:1655.6px;top:352.0px">电话</div><div class="w2" style="left:1694.6px;top:351.0px">:</div><div class="w3" style="left:1709.6px;top:350.1px">4006-6500-27</div>
<div class="w1" style="left:1655.6px;top:380.9px">网址</div><div class="w2" style="left:1694.6px;top:381.9px">:</div><div class="w4" style="left:1710.0px;top:380.5px">www.tdxsoft.com</div>
<div class="w1" style="left:-240.7px;top:462.0px">电话</div><div class="w2" style="left:-201.7px;top:461.0px">:</div><div class="w3" style="left:-186.7px;top:460.1px">4006-6500-27</div>
<div class="w1" style="left:-240.7px;top:490.9px">网址</div><div class="w2" style="left:-201.7px;top:491.9px">:</div><div class="w4" style="left:-186.3px;top:490.5px">www.tdxsoft.com</div>
<div class="w1" style="left:30.2px;top:462.0px">电话</div><div class="w2" style="left:69.2px;top:461.0px">:</div><div class="w3" style="left:84.2px;top:460.1px">4006-6500-27</div>
<div class="w1" style="left:30.2px;top:490.9px">网址</div><div class="w2" style="left:69.2px;top:491.9px">:</div><div class="w4" style="left:84.6px;top:490.5px">www.tdxsoft.com</div>
<div class="w1" style="left:301.1px;top:462.0px">电话</div><div class="w2" style="left:340.1px;top:461.0px">:</div><div class="w3" style="left:355.1px;top:460.1px">4006-6500-27</div>
<div class="w1" style="left:301.1px;top:490.9px">网址</div><div class="w2" style="left:340.1px;top:491.9px">:</div><div class="w4" style="left:355.5px;top:490.5px">www.tdxsoft.com</div>
<div class="w1" style="left:572.0px;top:462.0px">电话</div><div class="w2" style="left:611.0px;top:461.0px">:</div><div class="w3" style="left:626.0px;top:460.1px">4006-6500-27</div>
<div class="w1" style="left:572.0px;top:490.9px">网址</div><div class="w2" style="left:611.0px;top:491.9px">:</div><div class="w4" style="left:626.4px;top:490.5px">www.tdxsoft.com</div>
<div class="w1" style="left:842.9px;top:462.0px">电话</div><div class="w2" style="left:881.9px;top:461.0px">:</div><div class="w3" style="left:896.9px;top:460.1px">4006-6500-27</div>
<div class="w1" style="left:842.9px;top:490.9px">网址</div><div class="w2" style="left:881.9px;top:491.9px">:</div><div class="w4" style="left:897.3px;top:490.5px">www.tdxsoft.com</div>
<div class="w1" style="left:1113.8px;top:462.0px">电话</div><div class="w2" style="left:1152.8px;top:461.0px">:</div><div class="w3" style="left:1167.8px;top:460.1px">4006-6500-27</div>
<div class="w1" style="left:1113.8px;top:490.9px">网址</div><div class="w2" style="left:1152.8px;top:491.9px">:</div><div class="w4" style="left:1168.2px;top:490.5px">www.tdxsoft.com</div>
<div class="w1" style="left:1384.7px;top:462.0px">电话</div><div class="w2" style="left:1423.7px;top:461.0px">:</div><div class="w3" style="left:1438.7px;top:460.1px">4006-6500-27</div>
<div class="w1" style="left:1384.7px;top:490.9px">网址</div><div class="w2" style="left:1423.7px;top:491.9px">:</div><div class="w4" style="left:1439.1px;top:490.5px">www.tdxsoft.com</div>
<div class="w1" style="left:1655.6px;top:462.0px">电话</div><div class="w2" style="left:1694.6px;top:461.0px">:</div><div class="w3" style="left:1709.6px;top:460.1px">4006-6500-27</div>
<div class="w1" style="left:1655.6px;top:490.9px">网址</div><div class="w2" style="left:1694.6px;top:491.9px">:</div><div class="w4" style="left:1710.0px;top:490.5px">www.tdxsoft.com</div>
<div class="w1" style="left:-240.7px;top:572.0px">电话</div><div class="w2" style="left:-201.7px;top:571.0px">:</div><div class="w3" style="left:-186.7px;top:570.1px">4006-6500-27</div>
<div class="w1" style="left:-240.7px;top:600.9px">网址</div><div class="w2" style="left:-201.7px;top:601.9px">:</div><div class="w4" style="left:-186.3px;top:600.5px">www.tdxsoft.com</div>
<div class="w1" style="left:30.2px;top:572.0px">电话</div><div class="w2" style="left:69.2px;top:571.0px">:</div><div class="w3" style="left:84.2px;top:570.1px">4006-6500-27</div>
<div class="w1" style="left:30.2px;top:600.9px">网址</div><div class="w2" style="left:69.2px;top:601.9px">:</div><div class="w4" style="left:84.6px;top:600.5px">www.tdxsoft.com</div>
<div class="w1" style="left:301.1px;top:572.0px">电话</div><div class="w2" style="left:340.1px;top:571.0px">:</div><div class="w3" style="left:355.1px;top:570.1px">4006-6500-27</div>
<div class="w1" style="left:301.1px;top:600.9px">网址</div><div class="w2" style="left:340.1px;top:601.9px">:</div><div class="w4" style="left:355.5px;top:600.5px">www.tdxsoft.com</div>
<div class="w1" style="left:572.0px;top:572.0px">电话</div><div class="w2" style="left:611.0px;top:571.0px">:</div><div class="w3" style="left:626.0px;top:570.1px">4006-6500-27</div>
<div class="w1" style="left:572.0px;top:600.9px">网址</div><div class="w2" style="left:611.0px;top:601.9px">:</div><div class="w4" style="left:626.4px;top:600.5px">www.tdxsoft.com</div>
<div class="w1" style="left:842.9px;top:572.0px">电话</div><div class="w2" style="left:881.9px;top:571.0px">:</div><div class="w3" style="left:896.9px;top:570.1px">4006-6500-27</div>
<div class="w1" style="left:842.9px;top:600.9px">网址</div><div class="w2" style="left:881.9px;top:601.9px">:</div><div class="w4" style="left:897.3px;top:600.5px">www.tdxsoft.com</div>
<div class="w1" style="left:1113.8px;top:572.0px">电话</div><div class="w2" style="left:1152.8px;top:571.0px">:</div><div class="w3" style="left:1167.8px;top:570.1px">4006-6500-27</div>
<div class="w1" style="left:1113.8px;top:600.9px">网址</div><div class="w2" style="left:1152.8px;top:601.9px">:</div><div class="w4" style="left:1168.2px;top:600.5px">www.tdxsoft.com</div>
<div class="w1" style="left:1384.7px;top:572.0px">电话</div><div class="w2" style="left:1423.7px;top:571.0px">:</div><div class="w3" style="left:1438.7px;top:570.1px">4006-6500-27</div>
<div class="w1" style="left:1384.7px;top:600.9px">网址</div><div class="w2" style="left:1423.7px;top:601.9px">:</div><div class="w4" style="left:1439.1px;top:600.5px">www.tdxsoft.com</div>
<div class="w1" style="left:1655.6px;top:572.0px">电话</div><div class="w2" style="left:1694.6px;top:571.0px">:</div><div class="w3" style="left:1709.6px;top:570.1px">4006-6500-27</div>
<div class="w1" style="left:1655.6px;top:600.9px">网址</div><div class="w2" style="left:1694.6px;top:601.9px">:</div><div class="w4" style="left:1710.0px;top:600.5px">www.tdxsoft.com</div>
<div class="w1" style="left:-240.7px;top:682.0px">电话</div><div class="w2" style="left:-201.7px;top:681.0px">:</div><div class="w3" style="left:-186.7px;top:680.1px">4006-6500-27</div>
<div class="w1" style="left:-240.7px;top:710.9px">网址</div><div class="w2" style="left:-201.7px;top:711.9px">:</div><div class="w4" style="left:-186.3px;top:710.5px">www.tdxsoft.com</div>
<div class="w1" style="left:30.2px;top:682.0px">电话</div><div class="w2" style="left:69.2px;top:681.0px">:</div><div class="w3" style="left:84.2px;top:680.1px">4006-6500-27</div>
<div class="w1" style="left:30.2px;top:710.9px">网址</div><div class="w2" style="left:69.2px;top:711.9px">:</div><div class="w4" style="left:84.6px;top:710.5px">www.tdxsoft.com</div>
<div class="w1" style="left:301.1px;top:682.0px">电话</div><div class="w2" style="left:340.1px;top:681.0px">:</div><div class="w3" style="left:355.1px;top:680.1px">4006-6500-27</div>
<div class="w1" style="left:301.1px;top:710.9px">网址</div><div class="w2" style="left:340.1px;top:711.9px">:</div><div class="w4" style="left:355.5px;top:710.5px">www.tdxsoft.com</div>
<div class="w1" style="left:572.0px;top:682.0px">电话</div><div class="w2" style="left:611.0px;top:681.0px">:</div><div class="w3" style="left:626.0px;top:680.1px">4006-6500-27</div>
<div class="w1" style="left:572.0px;top:710.9px">网址</div><div class="w2" style="left:611.0px;top:711.9px">:</div><div class="w4" style="left:626.4px;top:710.5px">www.tdxsoft.com</div>
<div class="w1" style="left:842.9px;top:682.0px">电话</div><div class="w2" style="left:881.9px;top:681.0px">:</div><div class="w3" style="left:896.9px;top:680.1px">4006-6500-27</div>
<div class="w1" style="left:842.9px;top:710.9px">网址</div><div class="w2" style="left:881.9px;top:711.9px">:</div><div class="w4" style="left:897.3px;top:710.5px">www.tdxsoft.com</div>
<div class="w1" style="left:1113.8px;top:682.0px">电话</div><div class="w2" style="left:1152.8px;top:681.0px">:</div><div class="w3" style="left:1167.8px;top:680.1px">4006-6500-27</div>
<div class="w1" style="left:1113.8px;top:710.9px">网址</div><div class="w2" style="left:1152.8px;top:711.9px">:</div><div class="w4" style="left:1168.2px;top:710.5px">www.tdxsoft.com</div>
<div class="w1" style="left:1384.7px;top:682.0px">电话</div><div class="w2" style="left:1423.7px;top:681.0px">:</div><div class="w3" style="left:1438.7px;top:680.1px">4006-6500-27</div>
<div class="w1" style="left:1384.7px;top:710.9px">网址</div><div class="w2" style="left:1423.7px;top:711.9px">:</div><div class="w4" style="left:1439.1px;top:710.5px">www.tdxsoft.com</div>
<div class="w1" style="left:1655.6px;top:682.0px">电话</div><div class="w2" style="left:1694.6px;top:681.0px">:</div><div class="w3" style="left:1709.6px;top:680.1px">4006-6500-27</div>
<div class="w1" style="left:1655.6px;top:710.9px">网址</div><div class="w2" style="left:1694.6px;top:711.9px">:</div><div class="w4" style="left:1710.0px;top:710.5px">www.tdxsoft.com</div>
<div class="a" style="left:1787px;top:664px;font-size:19px;line-height:22px;color:#a3a3a3;-webkit-text-stroke:0.2px #a3a3a3;text-shadow:0 0 1px #fff">@金蝶云社区</div>
</body></html>
